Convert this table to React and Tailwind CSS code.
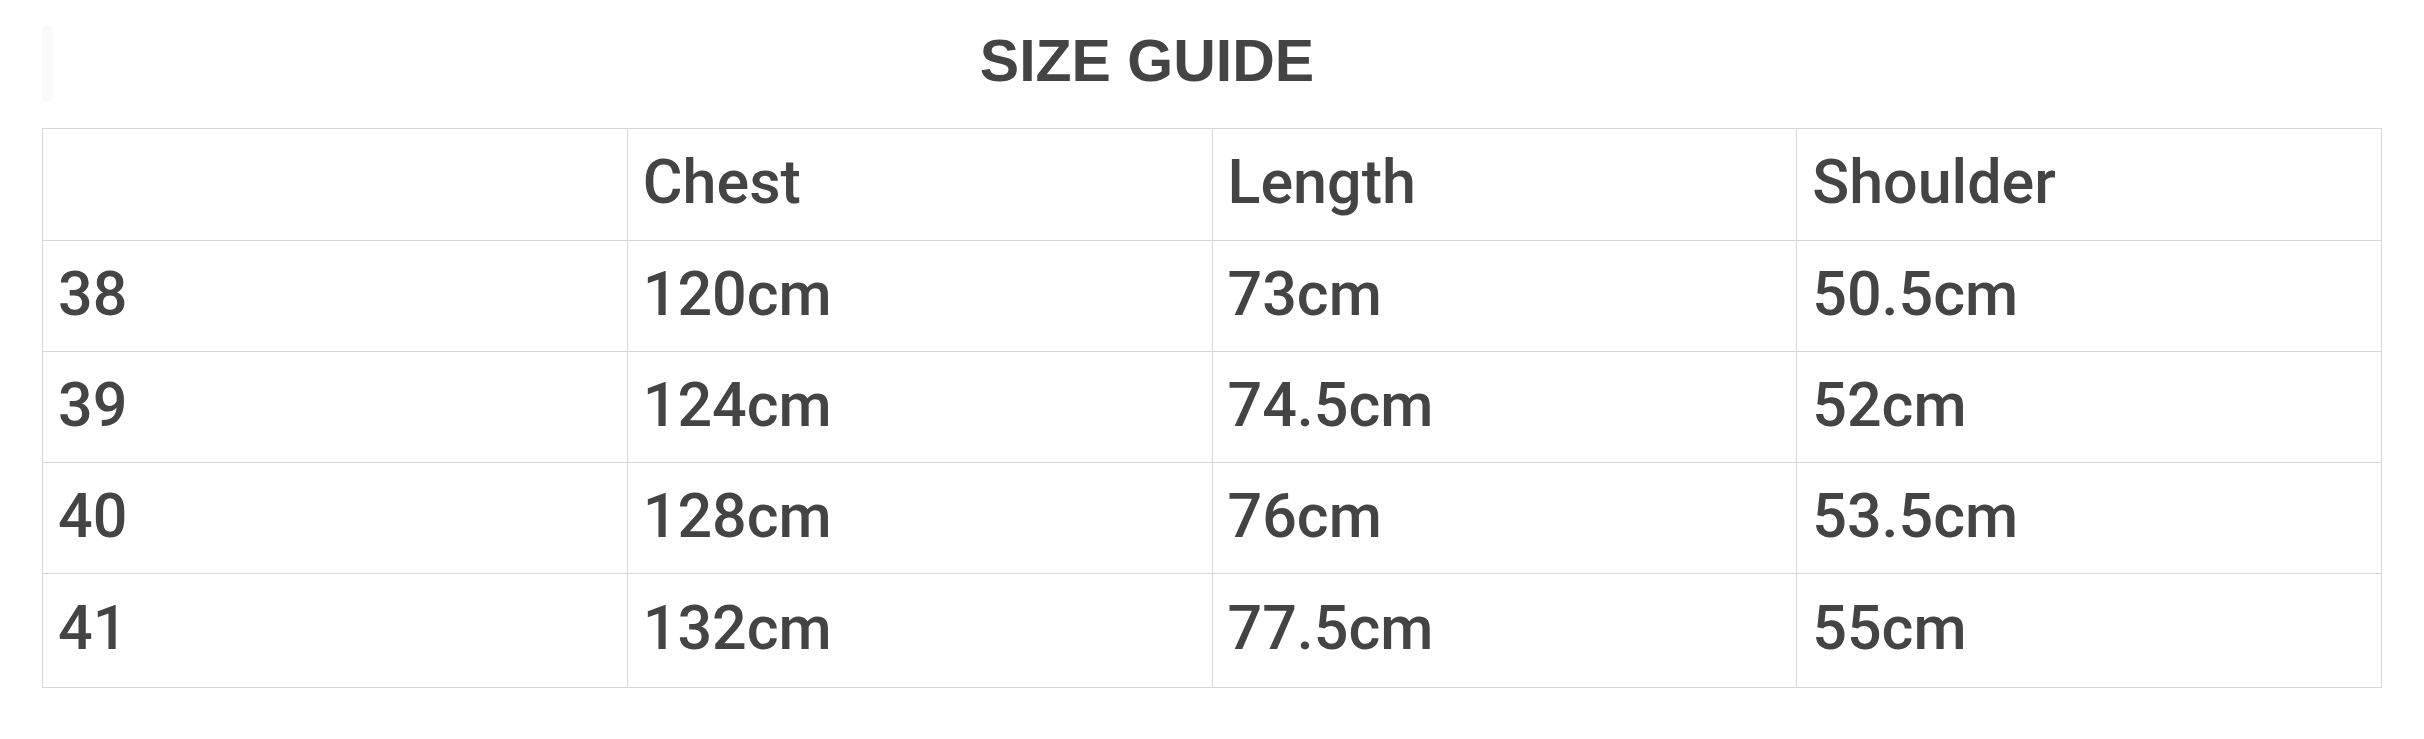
const rows = [
  ["38", "120cm", "73cm", "50.5cm"],
  ["39", "124cm", "74.5cm", "52cm"],
  ["40", "128cm", "76cm", "53.5cm"],
  ["41", "132cm", "77.5cm", "55cm"],
];

const headers = ["", "Chest", "Length", "Shoulder"];

function App() {
  return (
    <div
      className="w-[2424px] h-[739px] bg-white text-[#444444]"
      style={{ fontFamily: '"Liberation Sans", Arial, sans-serif' }}
    >
      {/* TITLE ROW */}
      <div className="flex items-start pl-[42px] pr-[183px] h-[128px]">
        <div className="mt-[25px] w-[11px] h-[77px] rounded-full bg-[#fafafa]" />
        <div className="flex-1 flex justify-center pt-[32px]">
          <h1 className="text-[59px] leading-[59px] font-bold">SIZE GUIDE</h1>
        </div>
      </div>

      {/* TABLE */}
      <div className="px-[42px]">
        <table
          className="w-full table-fixed border-collapse text-[61px] font-medium"
          style={{ fontFamily: 'Roboto, "Liberation Sans", sans-serif' }}
        >
          <thead>
            <tr className="h-[112px]">
              {headers.map((h, i) => (
                <th
                  key={i}
                  className="border border-[#d6d6d6] px-[15px] pb-[3px] text-left font-medium align-middle"
                >
                  {h}
                </th>
              ))}
            </tr>
          </thead>
          <tbody>
            {rows.map((row, r) => (
              <tr key={r} className={r === rows.length - 1 ? "h-[114px]" : "h-[111px]"}>
                {row.map((cell, c) => (
                  <td
                    key={c}
                    className="border border-[#d6d6d6] px-[15px] pb-[3px] align-middle"
                  >
                    {cell}
                  </td>
                ))}
              </tr>
            ))}
          </tbody>
        </table>
      </div>
    </div>
  );
}

export default App;
